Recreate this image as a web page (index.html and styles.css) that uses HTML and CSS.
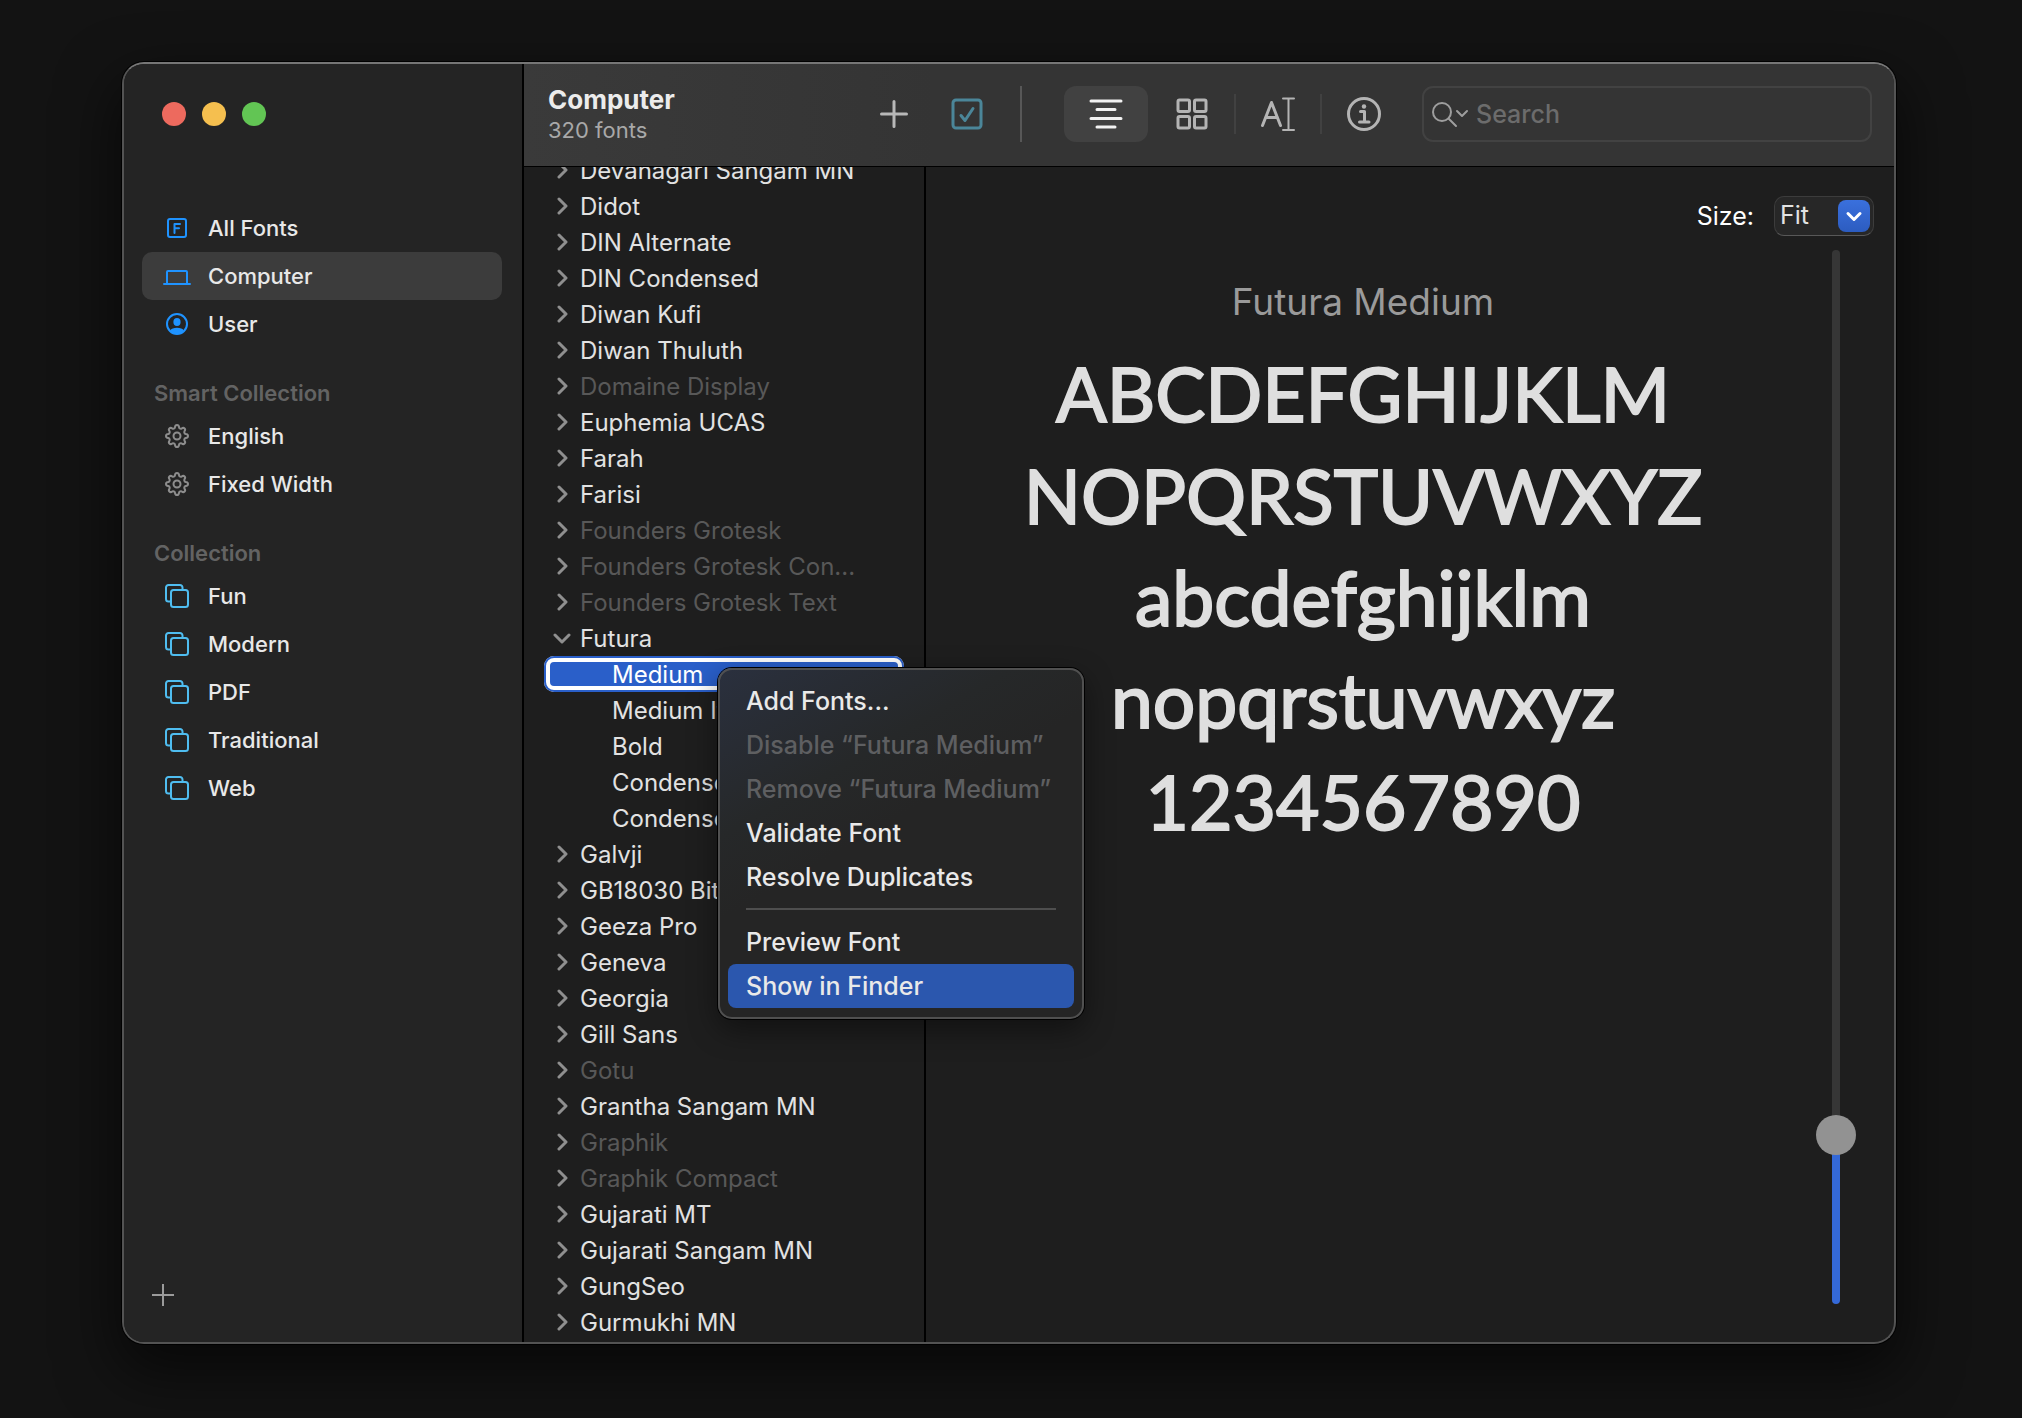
FILE: index.html
```html
<!DOCTYPE html>
<html lang="en">
<head>
<meta charset="utf-8">
<meta name="viewport" content="width=device-width, initial-scale=1">
<title>Font Book</title>
<link rel="stylesheet" href="styles.css">
</head>
<body>
<svg class="defs" aria-hidden="true">
  <defs>
    <symbol id="chevron" viewBox="0 0 18 18"><path d="M6 2l7 7-7 7"/></symbol>
    <symbol id="gear" viewBox="0 0 24 24"><path d="M10 3.2Q10.200 1 12 1Q13.800 1 14 3.200L14.400 4.200Q15.500 5 16.700 4.600Q18.300 3.200 19.600 4.400Q20.800 5.700 19.400 7.300Q19 8.500 19.800 9.600L20.800 10Q23 10.200 23 12Q23 13.800 20.800 14L19.800 14.400Q19 15.500 19.400 16.700Q20.800 18.300 19.600 19.600Q18.300 20.800 16.700 19.400Q15.500 19 14.400 19.800L14 20.800Q13.800 23 12 23Q10.200 23 10 20.800L9.600 19.800Q8.500 19 7.300 19.400Q5.700 20.800 4.400 19.600Q3.200 18.300 4.600 16.700Q5 15.500 4.200 14.400L3.200 14Q1 13.800 1 12Q1 10.200 3.200 10L4.200 9.600Q5 8.500 4.600 7.300Q3.200 5.700 4.400 4.400Q5.700 3.200 7.300 4.600Q8.500 5 9.600 4.200Z"/><circle cx="12" cy="12" r="3.500"/></symbol>
    <symbol id="stack" viewBox="0 0 24 24"><path d="M6 17.500H3.500a2.500 2.500 0 0 1-2.500-2.500V3.500A2.500 2.500 0 0 1 3.500 1H15a2.500 2.500 0 0 1 2.500 2.500V6"/><rect x="6" y="6" width="17" height="17" rx="2.500"/></symbol>
  </defs>
</svg>
<main class="window">
  <aside class="sidebar">
    <div class="lights">
      <button class="light red" aria-label="Close"></button>
      <button class="light yellow" aria-label="Minimize"></button>
      <button class="light green" aria-label="Zoom"></button>
    </div>
    <nav class="nav">
      <a class="item blue" href="#all"><svg class="icon" viewBox="0 0 28 28"><rect x="5" y="5" width="18" height="18" rx="2"/><path d="M11.500 19V10H17M11.500 14.300H16"/></svg>All Fonts</a>
      <a class="item blue current" href="#computer" aria-current="page"><svg class="icon" viewBox="0 0 28 28"><path d="M4 21V10q0-1 1-1H23q1 0 1 1V21M1 22H27"/></svg>Computer</a>
      <a class="item blue" href="#user"><svg class="icon" viewBox="0 0 28 28"><circle cx="14" cy="14" r="10"/><ellipse class="solid" cx="14" cy="12" rx="3.600" ry="4"/><path class="solid" d="M7 20.500Q9 18 14 17.800Q19 18 21 20.500Q18 24 14 24Q10 24 7 20.500Z"/></svg>User</a>
      <h2 class="group">Smart Collection</h2>
      <a class="item gray" href="#english"><svg class="icon small"><use href="#gear"/></svg>English</a>
      <a class="item gray" href="#fixed"><svg class="icon small"><use href="#gear"/></svg>Fixed Width</a>
      <h2 class="group">Collection</h2>
      <a class="item cyan" href="#fun"><svg class="icon small"><use href="#stack"/></svg>Fun</a>
      <a class="item cyan" href="#modern"><svg class="icon small"><use href="#stack"/></svg>Modern</a>
      <a class="item cyan" href="#pdf"><svg class="icon small"><use href="#stack"/></svg>PDF</a>
      <a class="item cyan" href="#traditional"><svg class="icon small"><use href="#stack"/></svg>Traditional</a>
      <a class="item cyan" href="#web"><svg class="icon small"><use href="#stack"/></svg>Web</a>
    </nav>
    <button class="new-collection" aria-label="New collection"><svg viewBox="0 0 22 22"><path d="M11 0V22M0 11H22"/></svg></button>
  </aside>

  <div class="content">
    <header class="toolbar">
      <div class="heading">
        <h1>Computer</h1>
        <p>320 fonts</p>
      </div>
      <button class="tool" aria-label="Add font"><svg viewBox="0 0 32 32"><path d="M16 3.500V28.500M3.500 16H28.500"/></svg></button>
      <button class="tool check" aria-label="Disable font"><svg viewBox="0 0 32 32"><rect x="2" y="2" width="28" height="28" rx="3"/><path d="M10 17.500L14 22.500L22 10.500"/></svg></button>
      <span class="rule tall"></span>
      <button class="view active" aria-label="Sample" aria-pressed="true"><svg viewBox="0 0 34 34"><path d="M2 4H32M8 12.500H26M2 21.500H32M8 30H26"/></svg></button>
      <button class="view" aria-label="Repertoire"><svg viewBox="0 0 34 34"><rect x="3" y="3" width="11.500" height="11.500" rx="1.500"/><rect x="19.500" y="3" width="11.500" height="11.500" rx="1.500"/><rect x="3" y="19.500" width="11.500" height="11.500" rx="1.500"/><rect x="19.500" y="19.500" width="11.500" height="11.500" rx="1.500"/></svg></button>
      <span class="rule"></span>
      <button class="view" aria-label="Custom"><svg viewBox="0 0 34 34"><path d="M1.500 28.500L10.500 5.500L19.500 28.500M4.500 20.500H16.500"/><path class="thin" d="M22 1.500H33M22 33H33M27.500 1.500V33"/></svg></button>
      <span class="rule"></span>
      <button class="view" aria-label="Information"><svg viewBox="0 0 34 34"><circle cx="17" cy="17" r="15.500"/><circle class="dot" cx="17" cy="9.500" r="2.200"/><path d="M13.500 14.500H17.500V25M12.500 25H22"/></svg></button>
      <label class="search">
        <svg viewBox="0 0 38 28"><circle cx="11" cy="12" r="9"/><path d="M17.500 18.500L25 26M26 11L31 16L36 11"/></svg>
        <input type="search" placeholder="Search" aria-label="Search">
      </label>
    </header>

    <div class="panes">
      <section class="list" aria-label="Fonts">
        <ul>
          <li><button class="row"><svg><use href="#chevron"/></svg>Devanagari Sangam MN</button></li>
          <li><button class="row"><svg><use href="#chevron"/></svg>Didot</button></li>
          <li><button class="row"><svg><use href="#chevron"/></svg>DIN Alternate</button></li>
          <li><button class="row"><svg><use href="#chevron"/></svg>DIN Condensed</button></li>
          <li><button class="row"><svg><use href="#chevron"/></svg>Diwan Kufi</button></li>
          <li><button class="row"><svg><use href="#chevron"/></svg>Diwan Thuluth</button></li>
          <li><button class="row off"><svg><use href="#chevron"/></svg>Domaine Display</button></li>
          <li><button class="row"><svg><use href="#chevron"/></svg>Euphemia UCAS</button></li>
          <li><button class="row"><svg><use href="#chevron"/></svg>Farah</button></li>
          <li><button class="row"><svg><use href="#chevron"/></svg>Farisi</button></li>
          <li><button class="row off"><svg><use href="#chevron"/></svg>Founders Grotesk</button></li>
          <li><button class="row off"><svg><use href="#chevron"/></svg>Founders Grotesk Con...</button></li>
          <li><button class="row off"><svg><use href="#chevron"/></svg>Founders Grotesk Text</button></li>
          <li><button class="row open" aria-expanded="true"><svg><use href="#chevron"/></svg>Futura</button>
            <ul>
              <li><button class="row child selected">Medium</button></li>
              <li><button class="row child">Medium Italic</button></li>
              <li><button class="row child">Bold</button></li>
              <li><button class="row child">Condensed Medium</button></li>
              <li><button class="row child">Condensed ExtraBold</button></li>
            </ul>
          </li>
          <li><button class="row"><svg><use href="#chevron"/></svg>Galvji</button></li>
          <li><button class="row"><svg><use href="#chevron"/></svg>GB18030 Bitmap</button></li>
          <li><button class="row"><svg><use href="#chevron"/></svg>Geeza Pro</button></li>
          <li><button class="row"><svg><use href="#chevron"/></svg>Geneva</button></li>
          <li><button class="row"><svg><use href="#chevron"/></svg>Georgia</button></li>
          <li><button class="row"><svg><use href="#chevron"/></svg>Gill Sans</button></li>
          <li><button class="row off"><svg><use href="#chevron"/></svg>Gotu</button></li>
          <li><button class="row"><svg><use href="#chevron"/></svg>Grantha Sangam MN</button></li>
          <li><button class="row off"><svg><use href="#chevron"/></svg>Graphik</button></li>
          <li><button class="row off"><svg><use href="#chevron"/></svg>Graphik Compact</button></li>
          <li><button class="row"><svg><use href="#chevron"/></svg>Gujarati MT</button></li>
          <li><button class="row"><svg><use href="#chevron"/></svg>Gujarati Sangam MN</button></li>
          <li><button class="row"><svg><use href="#chevron"/></svg>GungSeo</button></li>
          <li><button class="row"><svg><use href="#chevron"/></svg>Gurmukhi MN</button></li>
        </ul>
      </section>

      <section class="preview" aria-label="Preview">
        <div class="size">
          <label for="size">Size:</label>
          <span class="combo">
            <select id="size"><option>Fit</option></select>
            <svg class="arrow" viewBox="0 0 32 32"><path d="M10 13.500L16 19.500L22 13.500"/></svg>
          </span>
        </div>
        <div class="stage">
          <div class="specimen">
            <h2>Futura Medium</h2>
            <p>ABCDEFGHIJKLM<br>NOPQRSTUVWXYZ<br>abcdefghijklm<br>nopqrstuvwxyz<br>1234567890</p>
          </div>
          <div class="slider"><input type="range" min="0" max="1000" value="147" aria-label="Preview size"></div>
        </div>
      </section>
    </div>
  </div>

  <div class="menu" role="menu">
    <button role="menuitem">Add Fonts...</button>
    <button role="menuitem" disabled>Disable “Futura Medium”</button>
    <button role="menuitem" disabled>Remove “Futura Medium”</button>
    <button role="menuitem">Validate Font</button>
    <button role="menuitem">Resolve Duplicates</button>
    <hr>
    <button role="menuitem">Preview Font</button>
    <button role="menuitem" class="hover">Show in Finder</button>
  </div>
</main>
</body>
</html>
```
FILE: styles.css
```css
* { box-sizing: border-box; }

body {
  margin: 0;
  height: 100vh;
  padding: 62px 126px 74px 122px;
  background: #131313;
  color: #e2e2e2;
  font-family: Inter, "Liberation Sans", sans-serif;
  font-size: 24px;
  overflow: hidden;
}

h1, h2, p, ul { margin: 0; padding: 0; }
ul { list-style: none; }

button {
  margin: 0;
  padding: 0;
  border: 0;
  background: none;
  color: inherit;
  font: inherit;
  text-align: left;
}

svg {
  display: block;
  flex: none;
  fill: none;
  stroke: currentColor;
  stroke-width: 2;
  stroke-linecap: round;
  stroke-linejoin: round;
}

.defs { position: absolute; width: 0; height: 0; }

.window {
  position: relative;
  display: flex;
  height: 100%;
  border: 2px solid #535353;
  border-top-color: #767676;
  border-radius: 22px;
  background: #1e1e1e;
  box-shadow: 0 0 0 1px #000, 0 24px 60px 4px rgba(0, 0, 0, 0.6);
}

/* Sidebar */
.sidebar {
  flex: none;
  display: flex;
  flex-direction: column;
  width: 400px;
  padding: 38px 20px 36px 18px;
  border-right: 2px solid #000;
  border-radius: 20px 0 0 20px;
  background: #242424;
}

.lights { display: flex; gap: 16px; padding-left: 20px; }
.light { width: 24px; height: 24px; border-radius: 50%; }
.red { background: #ed6a5e; }
.yellow { background: #f5bf4f; }
.green { background: #62c554; }

.nav { flex: 1; padding-top: 78px; }

.item {
  display: flex;
  align-items: center;
  height: 48px;
  padding-left: 21px;
  gap: 17px;
  border-radius: 10px;
  color: #e8e8e8;
  font-size: 22px;
  font-weight: 500;
  text-decoration: none;
}
.current { background: #3c3c3c; }

.icon { width: 28px; height: 28px; }
.icon.small { padding: 2px; }
.icon .solid { fill: currentColor; stroke: none; }
.blue .icon { color: #1f93ff; }
.gray .icon { color: #8d8d8d; }
.cyan .icon { color: #4fbdf0; }

.group {
  margin-top: 26px;
  padding-left: 12px;
  color: #636363;
  font-size: 22px;
  font-weight: 600;
  line-height: 38px;
}

.new-collection { margin-left: 10px; width: 22px; color: #9b9b9b; }

/* Toolbar */
.content {
  flex: 1;
  min-width: 0;
  display: flex;
  flex-direction: column;
}

.toolbar {
  flex: none;
  display: flex;
  align-items: center;
  height: 103px;
  padding: 0 22px 2px 24px;
  border-bottom: 1px solid #000;
  border-radius: 0 20px 0 0;
  background: linear-gradient(90deg, #3a3a3a, #343434 30%);
}

.heading { flex: none; width: 324px; padding-top: 2px; }
.heading h1 { color: #ececec; font-size: 26px; font-weight: 700; line-height: 30px; }
.heading p { color: #a8a8a8; font-size: 22px; line-height: 30px; }

.tool { display: flex; justify-content: center; width: 44px; color: #b8b8b8; }
.tool svg { width: 32px; stroke-width: 3; }
.check { margin-left: 29px; color: #4b8699; }

.rule { flex: none; width: 2px; height: 40px; background: #414141; }
.rule.tall { height: 56px; margin: 0 42px 0 31px; background: #575757; }

.view {
  display: flex;
  align-items: center;
  justify-content: center;
  width: 84px;
  height: 56px;
  border-radius: 12px;
  color: #b4b4b4;
}
.view svg { width: 34px; stroke-width: 3; }
.view .thin { stroke-width: 2; }
.view .dot { fill: currentColor; stroke: none; }
.view.active { margin-right: 2px; background: #414141; color: #f2f2f2; }

.search {
  flex: 1;
  display: flex;
  align-items: center;
  gap: 7px;
  height: 56px;
  min-width: 0;
  margin-left: 16px;
  padding: 0 7px;
  border: 2px solid #424242;
  border-radius: 11px;
  color: #9e9e9e;
}
.search svg { width: 38px; height: 28px; }
.search input {
  flex: 1;
  min-width: 0;
  padding: 0;
  border: 0;
  outline: 0;
  background: none;
  color: #e2e2e2;
  font: inherit;
  font-size: 25px;
  font-weight: 500;
}
.search input::placeholder { color: #6c6c6c; }

/* Font list */
.panes { flex: 1; min-height: 0; display: flex; }

.list {
  flex: none;
  width: 402px;
  padding: 0 20px;
  border-right: 2px solid #000;
  overflow: hidden;
}
.list > ul { margin-top: -15px; }

.row {
  display: flex;
  align-items: center;
  gap: 8px;
  width: 100%;
  height: 36px;
  padding-left: 8px;
  white-space: nowrap;
}
.row svg { width: 20px; height: 18px; stroke-width: 3; color: #8f8f8f; }
.row.open svg { transform: rotate(90deg); }
.row.off { color: #585858; }
.row.child { padding-left: 68px; }
.row.selected {
  padding-left: 62px;
  border: 6px solid #fff;
  border-radius: 10px;
  outline: 2px solid #2a5fc9;
  outline-offset: -2px;
  background: #2a5fc9;
  color: #fff;
}

/* Preview */
.preview {
  flex: 1;
  min-width: 0;
  display: flex;
  flex-direction: column;
}

.size {
  display: flex;
  align-items: center;
  justify-content: flex-end;
  gap: 20px;
  padding: 29px 20px 0;
  color: #fff;
  font-size: 25px;
}
.combo { position: relative; width: 100px; }
.combo select {
  appearance: none;
  display: block;
  width: 100%;
  height: 40px;
  padding: 0 0 2px 5px;
  border: 1px solid #3c3c3c;
  border-bottom-color: #585858;
  border-radius: 10px;
  background: #272727;
  color: #e2e2e2;
  font: inherit;
}
.arrow {
  position: absolute;
  top: 4px;
  right: 4px;
  width: 32px;
  height: 32px;
  border-radius: 8px;
  background: linear-gradient(#3a70dd, #2c5cc0);
  color: #fff;
  stroke-width: 3;
  pointer-events: none;
}

.stage { flex: 1; min-height: 0; display: flex; }
.specimen { flex: 1; min-width: 0; padding-top: 41px; text-align: center; }
.specimen h2 { color: #9a9a9a; font-size: 37px; font-weight: 400; line-height: 50px; }
.specimen p {
  padding-top: 15px;
  color: #dfdfdf;
  font-family: Lato, sans-serif;
  font-size: 75px;
  line-height: 102px;
  -webkit-text-stroke: 2px #dfdfdf;
}

.slider { flex: none; width: 94px; padding: 14px 38px 38px 16px; }
.slider input {
  appearance: none;
  writing-mode: vertical-lr;
  direction: rtl;
  display: block;
  width: 40px;
  height: 100%;
  margin: 0;
  background: none;
}
.slider input::-webkit-slider-runnable-track {
  width: 8px;
  border-radius: 4px;
  background: linear-gradient(to top, #3469d8 16%, #363636 16%);
}
.slider input::-webkit-slider-thumb {
  appearance: none;
  width: 40px;
  height: 40px;
  margin-left: -16px;
  border-radius: 50%;
  background: #929292;
}

/* Context menu */
.menu {
  position: absolute;
  left: 594px;
  top: 604px;
  width: 366px;
  padding: 9px 8px;
  border: 2px solid #505050;
  border-radius: 14px;
  background: linear-gradient(150deg, #2a303e, #262829 30%, #252525 45%);
  box-shadow: 0 0 0 1px #000, 0 10px 30px rgba(0, 0, 0, 0.45);
  font-size: 25px;
  font-weight: 500;
}
.menu button {
  display: block;
  width: 100%;
  height: 44px;
  padding-left: 18px;
  border-radius: 8px;
  color: #e9e9e9;
  white-space: nowrap;
}
.menu button:disabled { color: #5e5f61; }
.menu .hover { background: #2b57ae; }
.menu hr { margin: 9px 18px 10px; border: 0; height: 2px; background: #4e4e4e; }
```
